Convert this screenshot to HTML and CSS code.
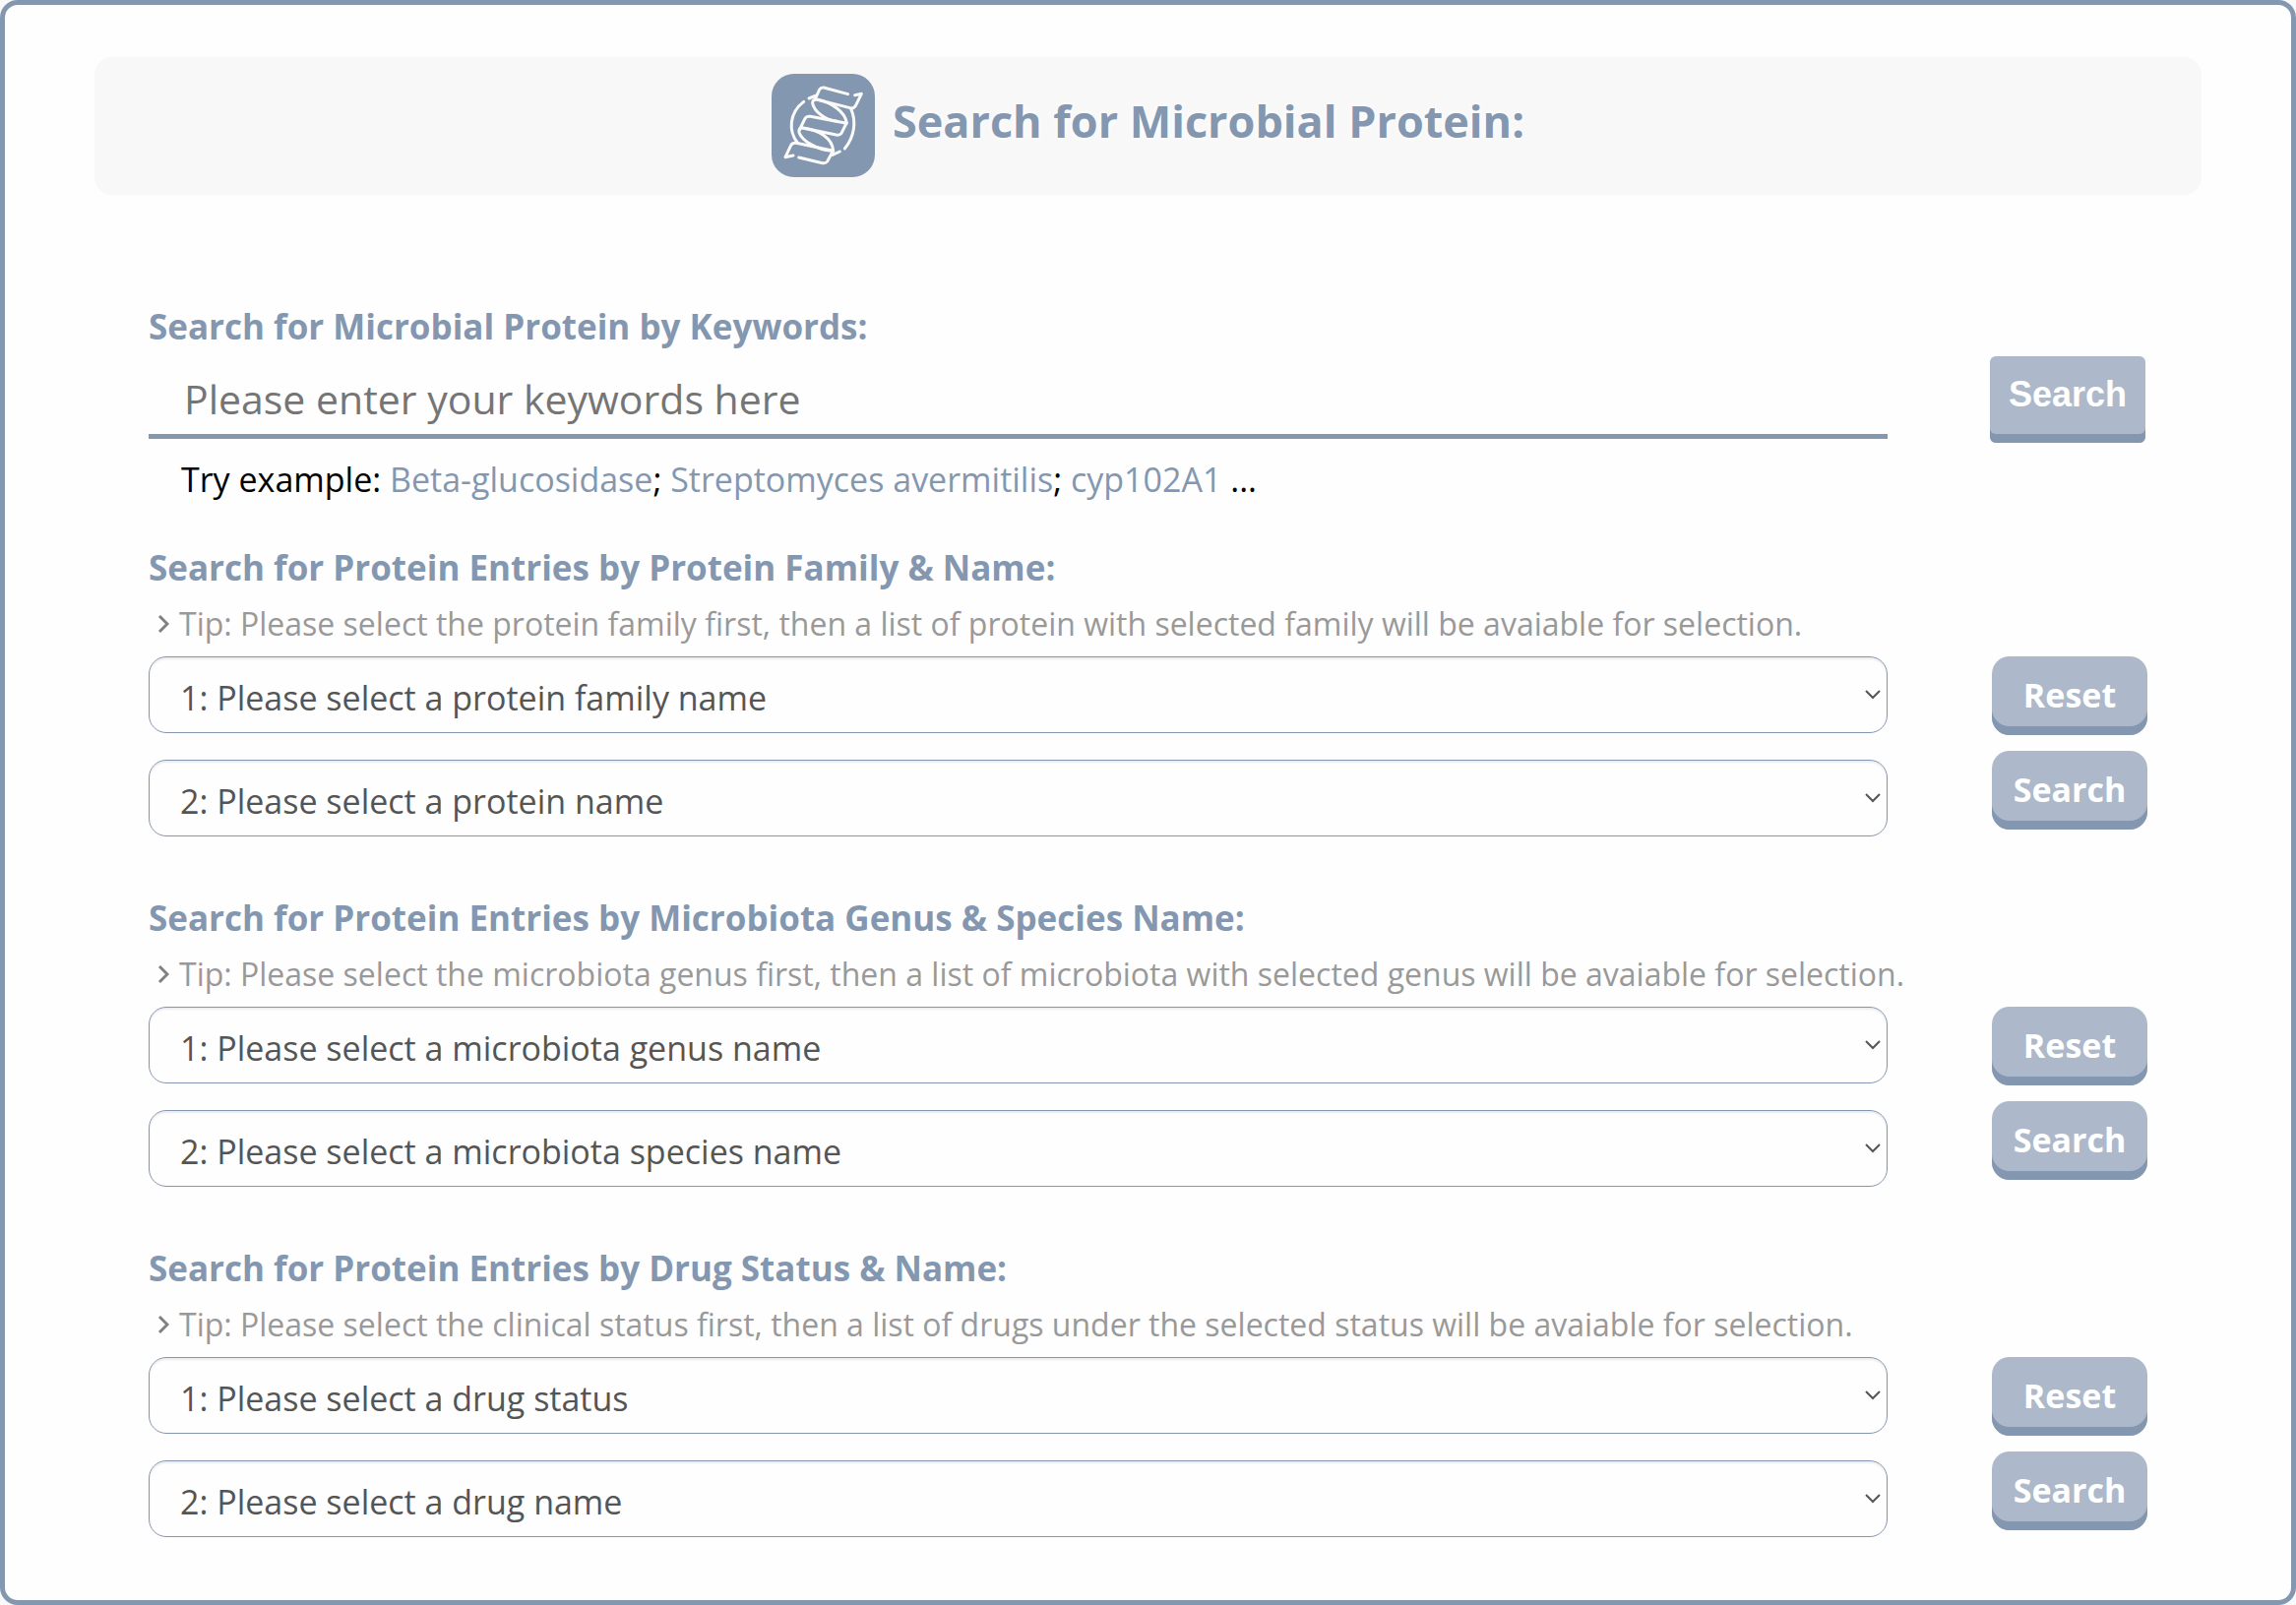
FILE: index.html
```html
<!DOCTYPE html>
<html lang="en">
<head>
<meta charset="utf-8">
<title>Search for Microbial Protein</title>
<link rel="stylesheet" href="styles.css">
</head>
<body>
<main class="panel">
  <header class="banner">
    <svg class="logo" viewBox="-33 -27 315 315" aria-hidden="true">
      <rect class="logo-tile" x="-33" y="-27" width="315" height="315" rx="68"/>
      <g class="logo-lines">
        <path d="M65 58C20 92 18 148 46 183"/>
        <path d="M209 80C226 118 220 164 190 201"/>
        <path d="M81 48L100 40M99 52L113 21Q117 14 126 15L200 35"/>
        <path d="M221 38L241 34L223 71Q217 80 206 77L108 52Q91 49 92 63C96 86 128 113 166 118"/>
        <path d="M108 52C152 62 190 88 196 122L180 154Q175 161 164 159L62 138"/>
        <path d="M52 144L69 109Q74 101 85 103L196 124"/>
        <path d="M62 138Q48 138 51 152C60 176 100 203 150 208"/>
        <path d="M68 139C112 146 152 168 155 207L137 240Q132 247 122 245L50 228"/>
        <path d="M33 222L9 227L26 191Q31 182 42 184L155 208M153 220L175 210"/>
      </g>
    </svg>
    <h1 class="title">Search for Microbial Protein:</h1>
  </header>

  <form class="block">
    <label class="heading" for="keywords">Search for Microbial Protein by Keywords:</label>
    <div class="row row-keywords">
      <input class="keywords" id="keywords" type="text" placeholder="Please enter your keywords here">
      <button class="button button-square" type="submit">Search</button>
    </div>
    <p class="example">Try example: <a href="#">Beta-glucosidase</a>; <a href="#">Streptomyces avermitilis</a>; <a href="#">cyp102A1</a> ...</p>
  </form>

  <form class="block">
    <h2 class="heading">Search for Protein Entries by Protein Family &amp; Name:</h2>
    <p class="tip"><svg class="tip-mark" viewBox="0 0 12 20" aria-hidden="true"><path d="M2 2L10 10L2 18"/></svg>Tip: Please select the protein family first, then a list of protein with selected family will be avaiable for selection.</p>
    <div class="row">
      <div class="fields">
        <select class="choice" aria-label="Protein family name"><option>1: Please select a protein family name</option></select>
        <select class="choice" aria-label="Protein name"><option>2: Please select a protein name</option></select>
      </div>
      <div class="actions">
        <button class="button" type="reset">Reset</button>
        <button class="button" type="submit">Search</button>
      </div>
    </div>
  </form>

  <form class="block">
    <h2 class="heading">Search for Protein Entries by Microbiota Genus &amp; Species Name:</h2>
    <p class="tip"><svg class="tip-mark" viewBox="0 0 12 20" aria-hidden="true"><path d="M2 2L10 10L2 18"/></svg>Tip: Please select the microbiota genus first, then a list of microbiota with selected genus will be avaiable for selection.</p>
    <div class="row">
      <div class="fields">
        <select class="choice" aria-label="Microbiota genus name"><option>1: Please select a microbiota genus name</option></select>
        <select class="choice" aria-label="Microbiota species name"><option>2: Please select a microbiota species name</option></select>
      </div>
      <div class="actions">
        <button class="button" type="reset">Reset</button>
        <button class="button" type="submit">Search</button>
      </div>
    </div>
  </form>

  <form class="block">
    <h2 class="heading">Search for Protein Entries by Drug Status &amp; Name:</h2>
    <p class="tip"><svg class="tip-mark" viewBox="0 0 12 20" aria-hidden="true"><path d="M2 2L10 10L2 18"/></svg>Tip: Please select the clinical status first, then a list of drugs under the selected status will be avaiable for selection.</p>
    <div class="row">
      <div class="fields">
        <select class="choice" aria-label="Drug status"><option>1: Please select a drug status</option></select>
        <select class="choice" aria-label="Drug name"><option>2: Please select a drug name</option></select>
      </div>
      <div class="actions">
        <button class="button" type="reset">Reset</button>
        <button class="button" type="submit">Search</button>
      </div>
    </div>
  </form>
</main>
</body>
</html>
```
FILE: styles.css
```css
:root {
  --blue: #8497b0;
  --blue-light: #adb9ca;
}

* {
  box-sizing: border-box;
}

body {
  margin: 0;
  background: #f8f9fb;
  font-family: "Segoe UI", "Open Sans", "Noto Sans", sans-serif;
}

.panel {
  min-height: 100vh;
  padding: 53px 91px 50px;
  border: 5px solid var(--blue);
  border-radius: 18px;
  background: #fefefe;
}

.banner {
  display: flex;
  justify-content: center;
  align-items: center;
  gap: 18px;
  height: 140px;
  margin-bottom: 110px;
  padding-bottom: 2px;
  border-radius: 18px;
  background: #f8f8f8;
}

.logo {
  width: 105px;
  height: 105px;
}

.logo-tile {
  fill: var(--blue);
}

.logo-lines {
  fill: none;
  stroke: #fafafa;
  stroke-width: 9;
  stroke-linecap: round;
  stroke-linejoin: round;
}

.title {
  margin: 0;
  padding-bottom: 8px;
  color: var(--blue);
  font-size: 45px;
  line-height: 60px;
  font-weight: 700;
  text-shadow: 0 0 6px #fff;
}

.block {
  margin: 0 55px 59px;
}

.block:nth-of-type(1) {
  margin-bottom: 42px;
}

.block:last-child {
  margin-bottom: 0;
}

.heading {
  display: block;
  margin: 0;
  color: var(--blue);
  font-size: 35px;
  line-height: 48px;
  font-weight: 700;
}

.row {
  display: grid;
  grid-template-columns: 1fr 158px;
  column-gap: 106px;
  align-items: start;
}

.row-keywords {
  column-gap: 104px;
  padding-right: 2px;
}

.keywords {
  width: 100%;
  height: 90px;
  padding: 12px 36px 0;
  border: 0;
  border-bottom: 5px solid var(--blue);
  background: transparent;
  color: #555;
  font-family: inherit;
  font-size: 41px;
}

.keywords::placeholder {
  color: #757575;
}

.example {
  margin: 13px 0 0;
  padding-left: 33px;
  color: #000;
  font-size: 34px;
  line-height: 48px;
}

.example a {
  color: var(--blue);
  text-decoration: none;
}

.tip {
  display: flex;
  align-items: center;
  gap: 10px;
  margin: 11px 0;
  padding-left: 9px;
  color: #999;
  font-size: 32px;
  line-height: 44px;
  white-space: nowrap;
}

.tip-mark {
  width: 12px;
  height: 20px;
  fill: none;
  stroke: #808080;
  stroke-width: 3;
}

.fields {
  display: grid;
  gap: 27px;
}

.choice {
  width: 100%;
  height: 78px;
  padding: 6px 31px 0;
  border: 1px solid var(--blue);
  border-radius: 18px;
  appearance: none;
  background: #fefefe url("data:image/svg+xml,%3Csvg xmlns='http://www.w3.org/2000/svg' width='16' height='10' fill='none' stroke='%23555' stroke-width='2'%3E%3Cpath d='M1 1L8 8L15 1'/%3E%3C/svg%3E") no-repeat right 6px center;
  box-shadow: inset 0 2px 2px rgba(0, 0, 0, 0.075);
  color: #555;
  font-family: inherit;
  font-size: 34px;
}

.actions {
  display: grid;
  gap: 16px;
}

.button {
  width: 158px;
  height: 80px;
  padding: 0 0 2px;
  border: 0;
  border-radius: 18px;
  background: var(--blue-light);
  box-shadow: inset 0 -9px 0 var(--blue);
  color: #fff;
  font-family: inherit;
  font-size: 34px;
  font-weight: 700;
}

.button-square {
  height: 88px;
  margin-top: 6px;
  padding-bottom: 10px;
  border-radius: 6px;
  font-family: Arial, "Liberation Sans", sans-serif;
  font-size: 36px;
}
```
